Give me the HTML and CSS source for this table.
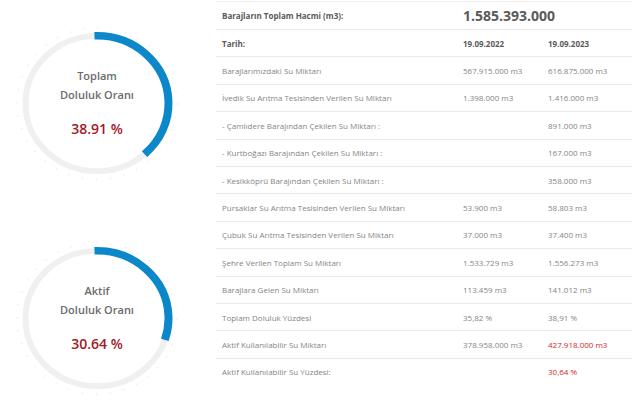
FILE: index.html
```html
<!DOCTYPE html>
<html lang="tr">
<head>
<meta charset="utf-8">
<link rel="stylesheet" href="styles.css">
</head>
<body>
<div class="page">
  <div class="gauges">
    <div class="gauge g1">
      <svg class="ring" viewBox="0 0 170 170" preserveAspectRatio="none">
        <circle class="ticks" cx="85" cy="85" r="80"/>
        <circle class="track" cx="85" cy="85" r="71.5"/>
        <circle class="bar" cx="85" cy="85" r="71.5" stroke-dasharray="174.8 449.2" transform="rotate(-92 85 85)"/>
      </svg>
      <div class="glabel">
        <div class="gtitle">Toplam<br>Doluluk Oranı</div>
        <div class="gval">38.91 %</div>
      </div>
    </div>
    <div class="gauge g2">
      <svg class="ring" viewBox="0 0 170 170" preserveAspectRatio="none">
        <circle class="ticks" cx="85" cy="85" r="80"/>
        <circle class="track" cx="85" cy="85" r="71.5"/>
        <circle class="bar" cx="85" cy="85" r="71.5" stroke-dasharray="137.6 449.2" transform="rotate(-92 85 85)"/>
      </svg>
      <div class="glabel">
        <div class="gtitle">Aktif<br>Doluluk Oranı</div>
        <div class="gval">30.64 %</div>
      </div>
    </div>
  </div>
  <table class="stats">
    <colgroup><col class="c1"><col class="c2"><col class="c3"></colgroup>
    <tr class="head total"><td>Barajların Toplam Hacmi (m3):</td><td colspan="2" class="big">1.585.393.000</td></tr>
    <tr class="head"><td>Tarih:</td><td>19.09.2022</td><td>19.09.2023</td></tr>
    <tr><td>Barajlarımızdaki Su Miktarı</td><td>567.915.000 m3</td><td>616.875.000 m3</td></tr>
    <tr><td>İvedik Su Arıtma Tesisinden Verilen Su Miktarı</td><td>1.398.000 m3</td><td>1.416.000 m3</td></tr>
    <tr><td>- Çamlıdere Barajından Çekilen Su Miktarı :</td><td></td><td>891.000 m3</td></tr>
    <tr><td>- Kurtboğazı Barajından Çekilen Su Miktarı :</td><td></td><td>167.000 m3</td></tr>
    <tr><td>- Kesikköprü Barajından Çekilen Su Miktarı :</td><td></td><td>358.000 m3</td></tr>
    <tr><td>Pursaklar Su Arıtma Tesisinden Verilen Su Miktarı</td><td>53.900 m3</td><td>58.803 m3</td></tr>
    <tr><td>Çubuk Su Arıtma Tesisinden Verilen Su Miktarı</td><td>37.000 m3</td><td>37.400 m3</td></tr>
    <tr><td>Şehre Verilen Toplam Su Miktarı</td><td>1.533.729 m3</td><td>1.556.273 m3</td></tr>
    <tr><td>Barajlara Gelen Su Miktarı</td><td>113.459 m3</td><td>141.012 m3</td></tr>
    <tr><td>Toplam Doluluk Yüzdesi</td><td>35,82 %</td><td>38,91 %</td></tr>
    <tr><td>Aktif Kullanılabilir Su Miktarı</td><td>378.958.000 m3</td><td class="red">427.918.000 m3</td></tr>
    <tr class="last"><td>Aktif Kullanılabilir Su Yüzdesi:</td><td></td><td class="red">30,64 %</td></tr>
  </table>
</div>
</body>
</html>
```

FILE: styles.css
```css
html, body {
  margin: 0;
  padding: 0;
  background: #fff;
}
body {
  width: 640px;
  height: 408px;
  overflow: hidden;
  font-family: "Open Sans", "DejaVu Sans", sans-serif;
}
.page {
  display: flex;
  align-items: flex-start;
}
.gauges {
  width: 216px;
  flex: none;
  display: flex;
  flex-direction: column;
  padding: 23px 0 0 12px;
  box-sizing: border-box;
  gap: 54px;
}
.gauge {
  display: grid;
  width: 170px;
  height: 161px;
}
.gauge > * {
  grid-area: 1 / 1;
}
.ring {
  width: 170px;
  height: 161px;
  display: block;
}
.ticks {
  fill: none;
  stroke: #ececec;
  stroke-width: 2;
  stroke-dasharray: 1 12.96;
}
.track {
  fill: none;
  stroke: #f0f0f0;
  stroke-width: 6;
}
.bar {
  fill: none;
  stroke: #0b87ca;
  stroke-width: 8;
}
.glabel {
  align-self: center;
  justify-self: center;
  text-align: center;
  margin-top: -2px;
}
.gtitle {
  font-size: 11px;
  font-weight: 600;
  line-height: 19px;
  color: #6b6b6b;
}
.gval {
  margin-top: 15px;
  font-size: 14px;
  font-weight: 600;
  line-height: 20px;
  color: #a3191f;
}
.stats {
  width: 416px;
  flex: none;
  border-collapse: collapse;
  table-layout: fixed;
  margin-top: 1px;
  border-top: 1px solid #efefef;
}
.c1 { width: 241px; }
.c2 { width: 85px; }
.c3 { width: 90px; }
.stats td {
  height: 26.4px;
  padding: 0 0 0 6px;
  font-size: 8px;
  color: #858585;
  border-bottom: 1px solid #e9e9e9;
  white-space: nowrap;
  vertical-align: middle;
}
.stats tr.head td {
  font-weight: 700;
  color: #5a5a5a;
}
.stats tr.total td {
  height: 27px;
}
.stats td.big {
  font-size: 14px;
  font-weight: 600;
  color: #555;
  line-height: 16px;
}
.stats td.red {
  color: #d1282c;
}
.stats tr.last td {
  border-bottom: none;
}
```
